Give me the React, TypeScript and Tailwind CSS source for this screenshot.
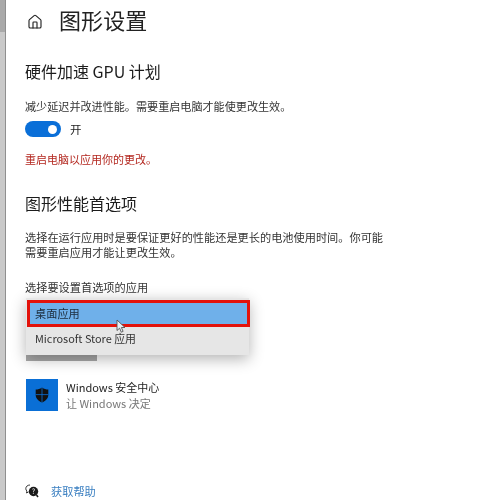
import { Home } from "lucide-react";

const font = { fontFamily: '"Noto Sans CJK SC", "Noto Sans", sans-serif' };

export default function App() {
  return (
    <div className="flex w-[500px] h-[500px] overflow-hidden bg-white text-[#1c1c1c] blur-[0.4px]" style={font}>
      {/* window edge */}
      <div className="w-[6px] h-full shrink-0 border-r border-[#8f8f8f] bg-[#c9c9c9]">
        <div className="h-[32px] bg-[#a9a9a9]" />
      </div>

      <div className="flex-1 flex flex-col pl-[19px] min-w-0">
        <div className="h-[44px] flex items-center">
          <Home className="w-[16px] h-[16px] ml-[2px] text-[#222]" strokeWidth={1.7} />
          <h1 className="ml-[16px] mb-[6px] text-[22px] leading-[34px] text-[#222] tracking-[0.1px]">图形设置</h1>
        </div>

        <h2 className="mt-[15px] text-[16px] leading-[24px]">硬件加速 GPU 计划</h2>
        <p className="mt-[15px] text-[11.1px] leading-[16px] text-[#333]">减少延迟并改进性能。需要重启电脑才能使更改生效。</p>

        <div className="mt-[7px] flex items-center h-[16px]">
          <div className="w-[36px] h-[16px] rounded-full bg-[#0a6fd8] flex items-center justify-end pr-[4px]">
            <div className="w-[9px] h-[9px] rounded-full bg-white" />
          </div>
          <span className="ml-[9px] text-[11.5px] leading-[16px]">开</span>
        </div>

        <p className="mt-[14px] text-[11px] leading-[16px] text-[#b3261e]">重启电脑以应用你的更改。</p>

        <h2 className="mt-[24px] text-[16px] leading-[24px]">图形性能首选项</h2>
        <p className="mt-[15px] w-[365px] text-[11.2px] leading-[15px] text-[#333]">
          选择在运行应用时是要保证更好的性能还是更长的电池使用时间。你可能需要重启应用才能让更改生效。
        </p>
        <p className="mt-[19px] text-[11.2px] leading-[16px] text-[#333]">选择要设置首选项的应用</p>

        {/* dropdown open over the select control */}
        <div className="relative mt-[3px] ml-[1px] w-[224px] h-[63px]">
          <div className="absolute left-0 bottom-0 w-[71px] h-[8px] bg-[#a8a8a8]" />
          <div className="absolute left-0 top-0 w-[223px] h-[57px] bg-[#e6e6e6] shadow-[0_4px_14px_rgba(0,0,0,0.3)]">
            <div className="mt-[2px] ml-[1px] w-[223px] h-[27px] border-[3px] border-[#e3120b] bg-[#6fb0ea] flex items-center pl-[5px] text-[11.2px] text-[#1c2b3a]">
              桌面应用
            </div>
            <div className="h-[23px] flex items-center pl-[9px] text-[10.9px] text-[#333]">Microsoft Store 应用</div>
          </div>
          <svg className="absolute left-[90px] top-[21px]" width="10" height="15" viewBox="0 0 10 15">
            <path d="M1 1v10.5l2.6-2.3 1.7 4 1.8-.8-1.7-3.9H9z" fill="#e8eef4" stroke="#555" strokeWidth="0.9" />
          </svg>
        </div>

        <div className="mt-[18px] ml-[1px] flex items-center">
          <div className="w-[32px] h-[32px] bg-[#0a6fd6] flex items-center justify-center">
            <svg width="14" height="16" viewBox="0 0 14 16">
              <path d="M7 0.5c2 1.4 4 2 6.3 2.1V8c0 3.500-3 6-6.300 7.500C3.700 14 .7 11.500.7 8V2.600C3 2.500 5 1.900 7 .5z" fill="#111" />
              <path d="M7 .5v15M.7 7.600h12.600" stroke="#0a6fd6" strokeWidth="0.8" />
            </svg>
          </div>
          <div className="ml-[8px]">
            <p className="text-[11px] leading-[16px] text-[#222]">Windows 安全中心</p>
            <p className="text-[11px] leading-[16px] text-[#777]">让 Windows 决定</p>
          </div>
        </div>

        <div className="mt-[72px] flex items-center h-[16px]">
          <svg width="14" height="14" viewBox="0 0 14 14">
            <path d="M5 1C2.500 1 .8 2.600.8 4.600c0 1 .4 1.900 1.100 2.500L1.500 9l2-1" fill="none" stroke="#222" strokeWidth="0.9" />
            <circle cx="8.500" cy="7.500" r="4.700" fill="#1a1a1a" />
            <path d="M11.500 11l1.500 2" stroke="#1a1a1a" strokeWidth="1.500" />
            <text x="8.500" y="10" fontSize="7" fill="#fff" textAnchor="middle">?</text>
          </svg>
          <a className="ml-[12px] text-[11.2px] leading-[16px] text-[#3a7fc1]">获取帮助</a>
        </div>
      </div>
    </div>
  );
}
